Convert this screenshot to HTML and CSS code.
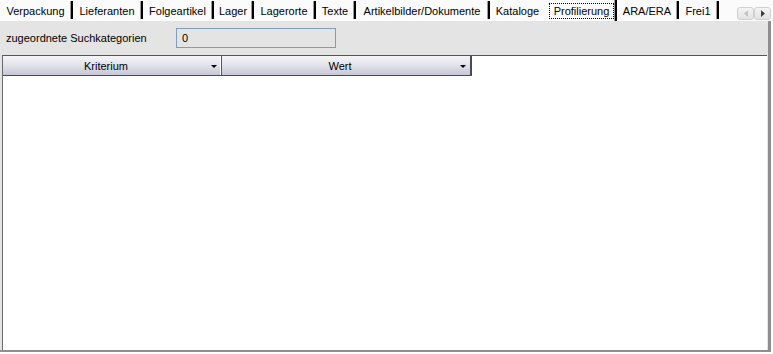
FILE: index.html
```html
<!DOCTYPE html>
<html>
<head>
<meta charset="utf-8">
<link rel="stylesheet" href="styles.css">
</head>
<body>
<div class="tabstrip">
  <div class="tabs">
    <div class="tab w73">Verpackung</div>
    <div class="tab w70">Lieferanten</div>
    <div class="tab w71">Folgeartikel</div>
    <div class="tab w40">Lager</div>
    <div class="tab w62">Lagerorte</div>
    <div class="tab w40">Texte</div>
    <div class="tab w134">Artikelbilder/Dokumente</div>
    <div class="tab w57 tab-before-active">Kataloge</div>
    <div class="tab w70 tab-active"><span class="focus">Profilierung</span></div>
    <div class="tab w62">ARA/ERA</div>
    <div class="tab w40">Frei1</div>
  </div>
  <div class="scroller">
    <div class="scroll-btn disabled"><svg width="6" height="7" viewBox="0 0 6 7"><path d="M5 0 L1 3.5 L5 7 Z" fill="#c4c4c4"/></svg></div>
    <div class="scroll-btn"><svg width="6" height="7" viewBox="0 0 6 7"><path d="M1 0 L5 3.5 L1 7 Z" fill="#404040"/></svg></div>
  </div>
</div>
<div class="panel">
  <div class="filter">
    <span class="filter-label">zugeordnete Suchkategorien</span>
    <div class="filter-input">0</div>
  </div>
  <div class="grid">
    <div class="grid-head">
      <div class="col col-kriterium"><span class="col-title">Kriterium</span><span class="col-arrow"></span></div>
      <div class="col col-wert"><span class="col-title">Wert</span><span class="col-arrow"></span></div>
    </div>
  </div>
</div>
</body>
</html>
```
FILE: styles.css
```css
html, body {
  margin: 0;
  padding: 0;
  background: #ffffff;
}
body {
  width: 773px;
  height: 354px;
  overflow: hidden;
  font-family: "Liberation Sans", Arial, sans-serif;
  font-size: 11px;
  color: #000;
}
.tabstrip {
  height: 21px;
  background: #fbfbfb;
  display: flex;
  position: relative;
}
.tabs {
  display: flex;
  align-items: flex-start;
}
.tab {
  box-sizing: border-box;
  height: 18px;
  margin-top: 1px;
  line-height: 20px;
  text-align: center;
  border-right: 2px solid #000;
  box-shadow: inset -1px 0 0 #9a9a9a;
  white-space: nowrap;
}
.w40 { width: 40px; }
.w57 { width: 57px; }
.w62 { width: 62px; }
.w70 { width: 70px; }
.w71 { width: 71px; }
.w73 { width: 73px; }
.w134 { width: 134px; }
.tab-before-active {
  border-right-color: transparent;
  box-shadow: none;
}
.tab-active {
  background: #fdfdfd;
  margin-top: 0;
  height: 21px;
  padding: 0 1px 0 2px;
  line-height: 15px;
}
.focus {
  display: block;
  margin-top: 3px;
  height: 14px;
  border: 1px dotted #000;
}
.scroller {
  position: absolute;
  left: 737px;
  top: 7px;
  display: flex;
}
.scroll-btn {
  width: 15px;
  height: 11px;
  border: 1px solid #d0d0d0;
  border-radius: 3px;
  background: linear-gradient(#f4f4f4, #e2e2e2);
  display: flex;
  align-items: center;
  justify-content: center;
}
.panel {
  width: 768px;
  height: 329px;
  background: #e4e4e4;
  border-right: 3px solid #8e8e8e;
  border-bottom: 2px solid #8e8e8e;
  display: flex;
  flex-direction: column;
}
.filter {
  height: 34px;
  display: flex;
  align-items: center;
  padding-left: 6px;
  box-sizing: border-box;
  padding-bottom: 1px;
}
.filter-label {
  width: 170px;
}
.filter-input {
  width: 153px;
  height: 18px;
  border: 1px solid #7f9db9;
  background: #e4e4e4;
  line-height: 18px;
  padding-left: 5px;
}
.grid {
  flex: 1;
  margin-left: 2px;
  margin-right: 1px;
  background: #fff;
  border-top: 1px solid #555;
  border-left: 1px solid #6a6a6a;
}
.grid-head {
  display: flex;
  height: 20px;
}
.col {
  height: 20px;
  box-sizing: border-box;
  background: linear-gradient(#f4f4f8, #e2e2ea 50%, #c6c6d6);
  border-bottom: 1px solid #4a4a55;
  display: flex;
  align-items: center;
  position: relative;
}
.col-kriterium {
  width: 219px;
  border-right: 1px solid #555;
  box-shadow: inset -1px 0 0 #fff;
}
.col-wert {
  width: 250px;
  border-right: 2px solid #4a4a55;
}
.col-title {
  flex: 1;
  text-align: center;
  padding-right: 12px;
}
.col-arrow {
  position: absolute;
  right: 4px;
  top: 9px;
  width: 0;
  height: 0;
  border-left: 3px solid transparent;
  border-right: 3px solid transparent;
  border-top: 3px solid #000;
}
```
